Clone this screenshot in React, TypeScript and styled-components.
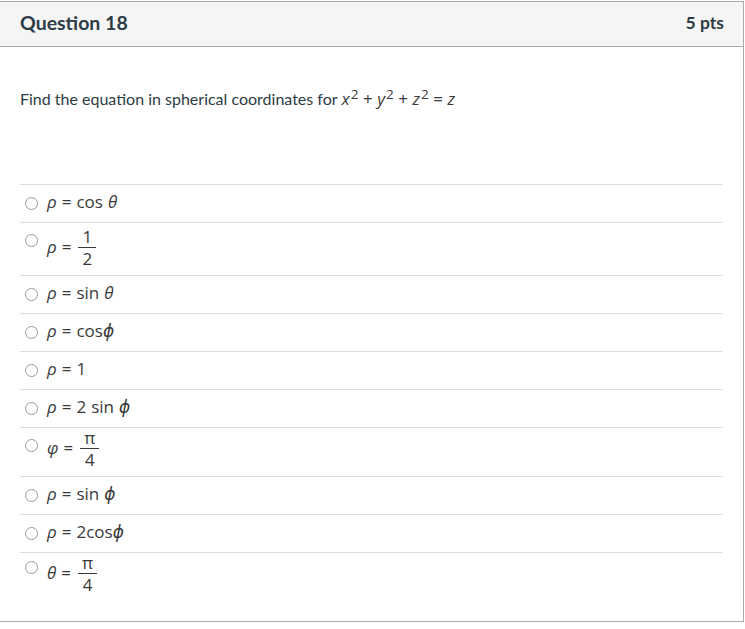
import React from "react";
import styled, { createGlobalStyle } from "styled-components";

const Global = createGlobalStyle`
  html, body { margin: 0; padding: 0; background: #fff; }
  body { font-family: Lato, "Open Sans", sans-serif; color: #2d3b45; }
`;

const Page = styled.div`
  width: 745px;
  height: 629px;
  overflow: hidden;
  padding-top: 1px;
  box-sizing: border-box;
`;

const Card = styled.div`
  margin-left: -1px;
  width: 745px;
  height: 621px;
  box-sizing: border-box;
  border: 1px solid #aaaaaa;
  display: flex;
  flex-direction: column;
`;

const Header = styled.div`
  height: 45px;
  flex: none;
  box-sizing: border-box;
  background: #f5f5f5;
  border-bottom: 1px solid #aaaaaa;
  display: flex;
  align-items: center;
  justify-content: space-between;
  padding: 0 19px 4px 20px;
`;

const Title = styled.div`
  font-size: 19.5px;
  font-weight: 700;
  color: #2d3b45;
`;

const Points = styled.div`
  font-size: 17.5px;
  font-weight: 700;
  color: #2d3b45;
`;

const Body = styled.div`
  padding: 40px 20px 0 20px;
`;

const Prompt = styled.div`
  font-size: 16px;
  line-height: 24px;
  color: #2d3b45;
  display: flex;
  align-items: baseline;
  gap: 4px;
`;

const Math = styled.span<{ $gap?: number; $lift?: number }>`
  font-family: "Open Sans", "DejaVu Sans", sans-serif;
  font-size: 17px;
  color: #3a3a3a;
  display: inline-flex;
  align-items: center;
  gap: ${(p) => p.$gap ?? 5}px;
  white-space: pre;
  margin-bottom: ${(p) => p.$lift ?? 0}px;
`;

const V = styled.i`
  font-style: italic;
`;

const Sup = styled.sup`
  font-size: 13.5px;
  position: relative;
  top: 1px;
  margin-left: 1px;
  vertical-align: super;
  line-height: 0;
`;

const Answers = styled.div`
  margin-top: 73px;
`;

const Row = styled.div<{ $tall?: number; $pad?: number }>`
  border-top: 1px solid #dddddd;
  height: ${(p) => p.$tall ?? 37}px;
  display: flex;
  align-items: ${(p) => (p.$tall ? "flex-start" : "center")};
  padding-left: 5px;
  padding-top: ${(p) => p.$pad ?? 0}px;
  box-sizing: content-box;
  gap: 9px;
`;

const Radio = styled.span<{ $top?: number }>`
  width: 13px;
  height: 13px;
  border: 1px solid #999999;
  border-radius: 50%;
  box-sizing: border-box;
  flex: none;
  margin-top: ${(p) => p.$top ?? 0}px;
`;

const Frac = styled.span`
  display: inline-flex;
  flex-direction: column;
  align-items: center;
  margin-left: 2px;
`;

const Num = styled.span`
  padding: 0 4px;
  border-bottom: 1px solid #3a3a3a;
  line-height: 20px;
`;

const Den = styled.span`
  line-height: 22px;
`;

const FracMath = styled(Math)`
  align-items: center;
`;

const Lhs = styled.span`
  display: inline-flex;
  gap: 5px;
  margin-bottom: 4px;
`;

function Fraction({ top, bottom }: { top: string; bottom: string }) {
  return (
    <Frac>
      <Num>{top}</Num>
      <Den>{bottom}</Den>
    </Frac>
  );
}

export default function App() {
  return (
    <Page>
      <Global />
      <Card>
        <Header>
          <Title>Question 18</Title>
          <Points>5 pts</Points>
        </Header>
        <Body>
          <Prompt>
            Find the equation in spherical coordinates for
            <Math $gap={4.5}>
              <span>
                <V>x</V>
                <Sup>2</Sup>
              </span>
              <span>+</span>
              <span>
                <V>y</V>
                <Sup>2</Sup>
              </span>
              <span>+</span>
              <span>
                <V>z</V>
                <Sup>2</Sup>
              </span>
              <span>=</span>
              <V>z</V>
            </Math>
          </Prompt>
          <Answers>
            <Row>
              <Radio />
              <Math $lift={4}>
                <V>ρ</V>
                <span>=</span>
                <span>cos</span>
                <V>θ</V>
              </Math>
            </Row>
            <Row $tall={48} $pad={4}>
              <Radio $top={7} />
              <FracMath>
                <Lhs>
                  <V>ρ</V>
                  <span>=</span>
                </Lhs>
                <Fraction top="1" bottom="2" />
              </FracMath>
            </Row>
            <Row>
              <Radio />
              <Math $lift={4}>
                <V>ρ</V>
                <span>=</span>
                <span>sin</span>
                <V>θ</V>
              </Math>
            </Row>
            <Row>
              <Radio />
              <Math $lift={4}>
                <V>ρ</V>
                <span>=</span>
                <span>
                  cos<V>ϕ</V>
                </span>
              </Math>
            </Row>
            <Row>
              <Radio />
              <Math $lift={4}>
                <V>ρ</V>
                <span>=</span>
                <span>1</span>
              </Math>
            </Row>
            <Row>
              <Radio />
              <Math $lift={4}>
                <V>ρ</V>
                <span>=</span>
                <span>2</span>
                <span>sin</span>
                <V>ϕ</V>
              </Math>
            </Row>
            <Row $tall={48} $pad={0}>
              <Radio $top={11} />
              <FracMath>
                <Lhs>
                  <V>φ</V>
                  <span>=</span>
                </Lhs>
                <Fraction top="π" bottom="4" />
              </FracMath>
            </Row>
            <Row>
              <Radio />
              <Math $lift={4}>
                <V>ρ</V>
                <span>=</span>
                <span>sin</span>
                <V>ϕ</V>
              </Math>
            </Row>
            <Row>
              <Radio />
              <Math $lift={4}>
                <V>ρ</V>
                <span>=</span>
                <span>
                  2cos<V>ϕ</V>
                </span>
              </Math>
            </Row>
            <Row $tall={48} $pad={0}>
              <Radio $top={8} />
              <FracMath>
                <Lhs>
                  <V>θ</V>
                  <span>=</span>
                </Lhs>
                <Fraction top="π" bottom="4" />
              </FracMath>
            </Row>
          </Answers>
        </Body>
      </Card>
    </Page>
  );
}
